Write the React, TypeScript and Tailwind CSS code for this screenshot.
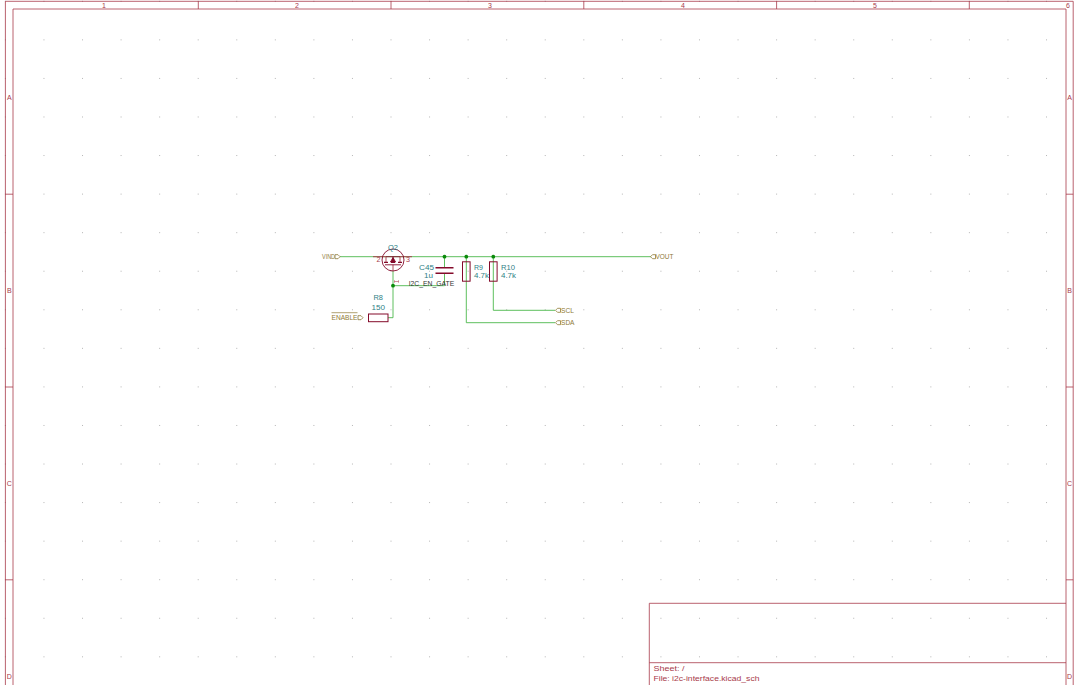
const frame = '#a83a4a';
const wire = '#4cb84c';
const junction = '#0a8a0a';
const labelCls = 'fill-[#8f7a35]';
const refCls = 'fill-[#2f7f86]';
const frameCls = 'fill-[#a83a4a]';

const colTicks = [198.3, 391, 583.8, 776.6, 969.3];
const rowTicks = [194.2, 387, 579.8];
const colLabels = [
    ['1', 104], ['2', 297], ['3', 490], ['4', 683], ['5', 875], ['6', 1068],
] as const;
const rowLabels = [
    ['A', 100], ['B', 293], ['C', 486], ['D', 679],
] as const;

const dots: [number, number][] = [];
for (let i = 0; i < 28; i++) {
    for (let j = 0; j < 18; j++) {
        dots.push([5.4 + i * 38.56, 1.3 + j * 38.56]);
    }
}

const wires = [
    'M340 256.7H651',
    'M393 271V285.7H444.5V273',
    'M393 285.7V317.7H388',
    'M444.5 256.7V267.5',
    'M466.3 256.7V322.7H555',
    'M493.3 256.7V310.3H555',
];

const labels = [
    { t: 'VIND', x: 322, y: 259, w: 13, c: labelCls },
    { t: 'VOUT', x: 655.5, y: 259, w: 18, c: labelCls },
    { t: 'SCL', x: 561, y: 313, w: 13, c: labelCls },
    { t: 'SDA', x: 561, y: 325.3, w: 13.5, c: labelCls },
    { t: 'ENABLE', x: 331.5, y: 320.3, w: 26, c: labelCls },
    { t: 'Q2', x: 388, y: 249.5, w: 10, c: refCls },
    { t: 'C45', x: 419, y: 269.5, w: 15, c: refCls },
    { t: '1u', x: 424, y: 278, w: 9, c: refCls },
    { t: 'R9', x: 474, y: 269.5, w: 9, c: refCls },
    { t: '4.7k', x: 474, y: 278, w: 15, c: refCls },
    { t: 'R10', x: 501, y: 269.5, w: 14, c: refCls },
    { t: '4.7k', x: 501, y: 278, w: 15, c: refCls },
    { t: 'R8', x: 373.5, y: 299.5, w: 9.5, c: refCls },
    { t: '150', x: 371.5, y: 309.5, w: 13.5, c: refCls },
    { t: 'I2C_EN_GATE', x: 408.7, y: 285.5, w: 45.5, c: 'fill-[#333333]' },
    { t: '2', x: 376.5, y: 262, w: 4, c: frameCls },
    { t: '3', x: 406, y: 262, w: 4, c: frameCls },
];

function Flag({ x, y, flip }: { x: number; y: number; flip?: boolean }) {
    // little hierarchical label arrow, tip on the wire side
    const d = flip
        ? `M${x} ${y}l2 -2h3v4h-3z`
        : `M${x + 5} ${y}l-2 -2h-3v4h3z`;
    return <path d={d} fill="white" stroke="#8f7a35" strokeWidth="0.8" />;
}

export default function App() {
    return (
        <div className="h-[685px] w-[1080px] overflow-hidden bg-white">
            <svg width="1080" height="685" viewBox="0 0 1080 685" className="block">
                {dots.map(([x, y]) => (
                    <rect key={`${x}-${y}`} x={x - 0.5} y={y - 0.5} width="1" height="1" fill="#b5b5b5" />
                ))}

                {/* sheet frame */}
                <g fill="none" stroke={frame} strokeWidth="0.8">
                    <path d="M5.4 690V1.3H1073.2V690" />
                    <path d="M13 690V9H1066V690" />
                    {colTicks.map((x) => (
                        <path key={x} d={`M${x} 1.3V9`} />
                    ))}
                    {rowTicks.map((y) => (
                        <path key={y} d={`M5.4 ${y}H13M1066 ${y}H1073.2`} />
                    ))}
                    <path d="M649.3 690V603.3H1066M649.3 662.7H1066" />
                </g>
                {colLabels.map(([t, x]) => (
                    <text key={t} x={x} y="7.6" textAnchor="middle" fontSize="7" className="fill-[#a83a4a] font-['Liberation_Sans',sans-serif]">
                        {t}
                    </text>
                ))}
                {rowLabels.map(([t, y]) => (
                    <g key={t} fontSize="7" textAnchor="middle" className="fill-[#a83a4a] font-['Liberation_Sans',sans-serif]">
                        <text x="9.3" y={y}>{t}</text>
                        <text x="1069.6" y={y}>{t}</text>
                    </g>
                ))}
                <text x="653.5" y="670.5" fontSize="7" textLength="31" lengthAdjust="spacingAndGlyphs" className="fill-[#a83a4a] font-['Liberation_Sans',sans-serif]">
                    Sheet: /
                </text>
                <text x="653.5" y="681" fontSize="7" textLength="106" lengthAdjust="spacingAndGlyphs" className="fill-[#a83a4a] font-['Liberation_Sans',sans-serif]">
                    File: i2c-interface.kicad_sch
                </text>

                {/* wires */}
                <g fill="none" stroke={wire} strokeWidth="0.9">
                    {wires.map((d) => (
                        <path key={d} d={d} />
                    ))}
                </g>
                {[[393, 285.7], [444.5, 256.7], [466.3, 256.7], [493.3, 256.7]].map(([x, y]) => (
                    <circle key={x} cx={x} cy={y} r="1.9" fill={junction} />
                ))}

                {/* Q2 */}
                <g fill="none" stroke="#840a2a" strokeWidth="0.9">
                    <path d="M373 256.7H386V262M412 256.7H400V262M393 271V264.8" stroke="#a83a4a" />
                    <circle cx="393" cy="260" r="11" />
                    <path d="M385 264.8H401" />
                    <path d="M384 262.4H388M391 262.4H395M398 262.4H402" strokeWidth="1.1" />
                    <path d="M386 256.7H400M393 256.7V262" />
                    <path d="M393 257.5L390.5 262H395.5Z" fill="#840a2a" />
                    <path d="M394.5 281.5H398.5M394.5 280.3V282.7M398.5 280.3V282.7" stroke="#b0485a" strokeWidth="0.6" />
                </g>

                {/* C45 */}
                <g fill="none" stroke="#840a2a" strokeWidth="1.5">
                    <path d="M435.5 267.7H453.5M435.5 273.3H453.5" />
                </g>

                {/* R8 R9 R10 */}
                <g fill="none" stroke="#840a2a" strokeWidth="1">
                    <rect x="368.5" y="314" width="19.5" height="7.7" />
                    <rect x="462.5" y="261.8" width="7.6" height="19.4" />
                    <rect x="489.5" y="261.8" width="7.6" height="19.4" />
                </g>

                <Flag x={335} y={256.7} />
                <Flag x={650.5} y={256.7} flip />
                <Flag x={555.5} y={310.3} flip />
                <Flag x={555.5} y={322.7} flip />
                <Flag x={358} y={317.7} />
                <path d="M331.5 312.7H357.5" stroke="#8f7a35" strokeWidth="0.7" />

                {labels.map((l) => (
                    <text
                        key={`${l.t}-${l.x}`}
                        x={l.x}
                        y={l.y}
                        fontSize="7"
                        textLength={l.w}
                        lengthAdjust="spacingAndGlyphs"
                        className={`${l.c} font-['Liberation_Sans',sans-serif]`}
                    >
                        {l.t}
                    </text>
                ))}
            </svg>
        </div>
    );
}
